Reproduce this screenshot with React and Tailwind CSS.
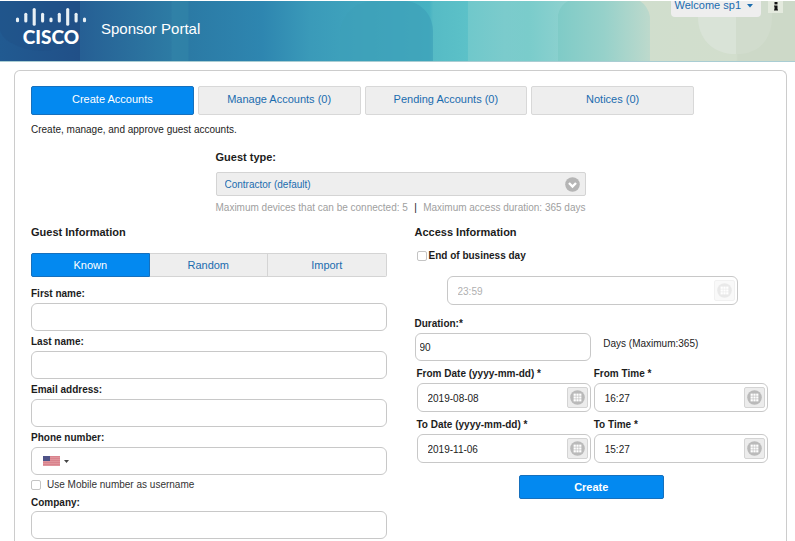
import { useState } from "react";

const TABS = ["Create Accounts", "Manage Accounts (0)", "Pending Accounts (0)", "Notices (0)"];
const MODES = ["Known", "Random", "Import"];

const BARS = [
  [17.5, 19, 20.8],
  [25.8, 14.2, 21],
  [34.2, 9.6, 24.2],
  [42.6, 14.2, 21],
  [51, 19, 20.8],
  [59.3, 14.2, 21],
  [67.7, 9.6, 24.2],
  [76.1, 14.2, 21],
  [84.5, 19, 20.8],
];

function HeaderArt() {
  return (
    <svg className="absolute inset-0 h-full w-full" viewBox="0 0 795 61" preserveAspectRatio="none" aria-hidden="true">
      <defs>
        <linearGradient id="sweep" x1="0" x2="1" y1="0" y2="0">
          <stop offset="0" stopColor="#215a91" />
          <stop offset="0.1" stopColor="#215088" />
          <stop offset="0.101" stopColor="#265f94" />
          <stop offset="0.215" stopColor="#2d7ba4" />
          <stop offset="0.217" stopColor="#3081a7" />
          <stop offset="0.236" stopColor="#2f81a7" />
          <stop offset="0.238" stopColor="#2b7aa5" />
          <stop offset="0.33" stopColor="#2e86b0" />
          <stop offset="0.39" stopColor="#3a9ab9" />
          <stop offset="0.54" stopColor="#47b2c2" />
          <stop offset="0.545" stopColor="#56bbc5" />
          <stop offset="0.588" stopColor="#5cc1c8" />
          <stop offset="0.589" stopColor="#70c8cb" />
          <stop offset="0.635" stopColor="#7bcbcc" />
          <stop offset="0.665" stopColor="#7acccb" />
          <stop offset="0.703" stopColor="#8ad0ce" />
          <stop offset="0.76" stopColor="#b4d8cc" />
          <stop offset="0.8" stopColor="#d0decd" />
          <stop offset="0.926" stopColor="#d2decd" />
          <stop offset="0.928" stopColor="#cdd9c8" />
          <stop offset="1" stopColor="#cdd9c8" />
        </linearGradient>
        <linearGradient id="arch" x1="0" x2="1" y1="0" y2="0">
          <stop offset="0" stopColor="#7fcbc7" />
          <stop offset="0.5" stopColor="#96d1ca" />
          <stop offset="1" stopColor="#bdd9cc" />
        </linearGradient>
      </defs>
      <rect width="795" height="61" fill="url(#sweep)" />
      <path d="M340 61V32C342 12 356 0 376 0H406C422 2 433 14 433 32V61Z" fill="#3d9fb9" opacity="0.65" />
      <path d="M558 61V14Q560 4 568 0H640Q648 5 650 16V61Z" fill="url(#arch)" />
      <path d="M698 0V16C698 38 712 54 736 54V0Z" fill="#d9e3d7" />
      <path d="M736 0H772V16C772 38 760 54 736 54Z" fill="#d1dccd" />
      <path d="M0 0H80V41Q40 60 10 42Q2 37 0 30Z" fill="#1f4c83" opacity="0.35" />
    </svg>
  );
}

function CiscoLogo() {
  return (
    <svg className="relative h-[50px] w-[90px] shrink-0" viewBox="0 0 90 50" role="img" aria-label="Cisco">
      {BARS.map(([x, top, bottom]) => (
        <line key={x} x1={x} x2={x} y1={top - 1} y2={bottom - 1} stroke="#e8f0f6" strokeWidth="3.1" strokeLinecap="round" />
      ))}
      <text x="51" y="43" textAnchor="middle" fill="#fff" fontFamily="Lato, sans-serif" fontWeight="900" fontSize="19">
        CISCO
      </text>
    </svg>
  );
}

function GridIcon() {
  return (
    <svg className="size-[15px]" viewBox="0 0 15 15" aria-hidden="true">
      <circle cx="7.5" cy="7.5" r="7.3" fill="#bababa" />
      {[0, 1, 2].map((r) =>
        [0, 1, 2].map((c) => (
          <rect key={`${r}${c}`} x={3.6 + c * 2.8} y={3.6 + r * 2.8} width="2.2" height="2.2" fill="#fff" />
        )),
      )}
    </svg>
  );
}

function PickerField({ id, label, value, disabled = false }) {
  return (
    <div className="flex h-[29px] items-center rounded-md border border-[#c8c8c8] bg-white pr-0.5">
      <input
        id={id}
        aria-label={label}
        defaultValue={value}
        disabled={disabled}
        className="h-full min-w-0 flex-1 bg-transparent pt-0.5 pl-2.5 text-[10px] outline-none disabled:text-[#b0b0b0]"
      />
      <button
        type="button"
        disabled={disabled}
        aria-label="Open picker"
        className="flex size-[21px] shrink-0 items-center justify-center rounded-xs border border-[#d4d4d4] bg-[#ececec] disabled:opacity-30"
      >
        <GridIcon />
      </button>
    </div>
  );
}

function LabelledPicker({ id, label, value }) {
  return (
    <div className="min-w-0">
      <label htmlFor={id} className="block h-[22px] leading-[26px] font-bold">
        {label}
      </label>
      <PickerField id={id} value={value} />
    </div>
  );
}

function TextField({ id, label }) {
  return (
    <div>
      <label htmlFor={id} className="block h-5 leading-[22px] font-bold">
        {label}
      </label>
      <input id={id} className="block h-7 w-full rounded-md border border-[#c8c8c8] px-2 text-[10px]" />
    </div>
  );
}

function Flag() {
  return (
    <svg className="h-[10px] w-[17px]" viewBox="0 0 17 10" aria-hidden="true">
      <rect width="17" height="10" fill="#e0959c" />
      {[0, 2, 4, 6, 8].map((y) => (
        <rect key={y} y={y} width="17" height="1" fill="#d9838d" />
      ))}
      <rect width="7" height="5" fill="#4f5388" />
    </svg>
  );
}

const CHECKBOX =
  "size-[10px] shrink-0 appearance-none rounded-xs border border-[#c4c4c4] bg-white checked:bg-[#0389f0]";

export default function App() {
  const [tab, setTab] = useState(0);
  const [mode, setMode] = useState(0);

  return (
    <div className="flex min-h-screen flex-col bg-white font-['Liberation_Sans',Arial,sans-serif] text-[10px] text-[#1c1c1c]">
      <header className="relative mt-px flex h-[61px] shrink-0 items-start border-b border-[#a9cdd3]">
        <HeaderArt />
        <CiscoLogo />
        <h1 className="relative ml-[11px] pt-4 text-[15px] leading-6 text-white">Sponsor Portal</h1>
        <div className="relative mr-3 ml-auto flex items-start gap-[7px]">
          <button
            type="button"
            className="flex h-4 items-start gap-1.5 rounded-b-sm bg-[#eeeeee] pr-2 pl-1 text-[11px] leading-[9px] text-[#1a6cae]"
          >
            Welcome sp1
            <svg className="mt-[3px] h-1 w-1.5" viewBox="0 0 6 4" aria-hidden="true">
              <path d="M0 0H6L3 3.5Z" fill="#1a6cae" />
            </svg>
          </button>
          <button type="button" aria-label="Information" className="flex h-3 w-[15px] justify-center bg-[#e4eade]">
            <svg className="h-3 w-2" viewBox="0 0 8 12" aria-hidden="true">
              <rect x="2.5" y="1" width="3" height="2.4" fill="#111" />
              <path d="M2 4.5H5.5V8.5H6V9.5H2V8.5H2.5V5.5H2Z" fill="#111" />
            </svg>
          </button>
        </div>
      </header>

      <main className="mt-2 mr-2 ml-[14px] flex-1 rounded-t-md border border-b-0 border-[#cccccc] px-4 pt-[15px] pb-[2px]">
        <nav className="grid max-w-[663px] grid-cols-4 gap-1">
          {TABS.map((name, i) => (
            <button
              key={name}
              type="button"
              onClick={() => setTab(i)}
              className={`h-[29px] rounded-xs border pb-0.5 text-[11px] ${
                i === tab ? "border-[#1670bd] bg-[#0389f0] text-white" : "border-[#d8d8d8] bg-[#eeeeee] text-[#1a6cae]"
              }`}
            >
              {name}
            </button>
          ))}
        </nav>
        <p className="mt-[5px] leading-5">Create, manage, and approve guest accounts.</p>

        <section className="mx-auto mt-[7px] w-[370px] max-w-full">
          <label htmlFor="guest-type" className="block text-[11px] leading-5 font-bold">
            Guest type:
          </label>
          <div className="relative mt-[5px]">
            <select
              id="guest-type"
              className="block h-6 w-full appearance-none rounded-xs border border-[#d4d4d4] bg-[#eeeeee] px-2 text-[10px] text-[#1a6cae]"
            >
              <option>Contractor (default)</option>
            </select>
            <svg className="pointer-events-none absolute top-[5px] right-1.5 size-[15px]" viewBox="0 0 15 15" aria-hidden="true">
              <circle cx="7.5" cy="7.5" r="7.3" fill="#b5b5b5" />
              <path d="M4 6L7.5 9.5L11 6" fill="none" stroke="#fff" strokeWidth="2.4" />
            </svg>
          </div>
          <p className="mt-1 flex justify-between leading-4 whitespace-nowrap text-[#a0a0a0]">
            <span>Maximum devices that can be connected: 5</span>
            <span className="text-[#1c1c1c]">|</span>
            <span>Maximum access duration: 365 days</span>
          </p>
        </section>

        <form className="mt-1.5 grid grid-cols-2 gap-7" onSubmit={(e) => e.preventDefault()}>
          <section>
            <h2 className="text-[11px] leading-5 font-bold">Guest Information</h2>
            <div className="mt-[11px] mb-1.5 grid grid-cols-3">
              {MODES.map((name, i) => (
                <button
                  key={name}
                  type="button"
                  onClick={() => setMode(i)}
                  className={`h-6 border text-[11px] first:rounded-l-xs last:rounded-r-xs ${
                    i === mode ? "border-[#1670bd] bg-[#0389f0] text-white" : "border-l-0 border-[#d4d4d4] bg-[#eeeeee] text-[#1a6cae]"
                  }`}
                >
                  {name}
                </button>
              ))}
            </div>
            <TextField id="first-name" label="First name:" />
            <TextField id="last-name" label="Last name:" />
            <TextField id="email" label="Email address:" />
            <div>
              <label htmlFor="phone" className="block h-5 leading-[22px] font-bold">
                Phone number:
              </label>
              <div className="flex h-7 items-center rounded-md border border-[#c8c8c8]">
                <button type="button" aria-label="Country code" className="flex items-center gap-1 pl-[11px]">
                  <Flag />
                  <svg className="h-[3px] w-[5px]" viewBox="0 0 5 3" aria-hidden="true">
                    <path d="M0 0H5L2.5 3Z" fill="#444" />
                  </svg>
                </button>
                <input id="phone" type="tel" className="h-full min-w-0 flex-1 bg-transparent px-2 outline-none" />
              </div>
            </div>
            <label className="flex items-center gap-1.5 leading-5 text-[#333]">
              <input type="checkbox" className={CHECKBOX} />
              Use Mobile number as username
            </label>
            <label htmlFor="company" className="block leading-4 font-bold">
              Company:
            </label>
            <input id="company" className="block h-7 w-full rounded-md border border-[#c8c8c8] px-2" />
          </section>

          <section className="pr-0.5">
            <h2 className="text-[11px] leading-5 font-bold">Access Information</h2>
            <label className="mt-1 flex items-center gap-0.5 pl-0.5 leading-5 font-bold">
              <input type="checkbox" className={CHECKBOX} />
              End of business day
            </label>
            <div className="mt-[10px] mr-[30px] ml-8">
              <PickerField id="end-of-day" label="End of business day time" value="23:59" disabled />
            </div>
            <label htmlFor="duration" className="mt-2 block h-5 leading-[22px] font-bold">
              Duration:*
            </label>
            <div className="flex">
              <input
                id="duration"
                defaultValue="90"
                className="block h-7 w-1/2 rounded-md border border-[#c8c8c8] px-1 text-[10px]"
              />
              <span className="ml-3 leading-[22px]">Days (Maximum:365)</span>
            </div>
            <div className="grid grid-cols-2 gap-x-[3px] pl-0.5">
              <LabelledPicker id="from-date" label="From Date (yyyy-mm-dd) *" value="2019-08-08" />
              <LabelledPicker id="from-time" label="From Time *" value="16:27" />
              <LabelledPicker id="to-date" label="To Date (yyyy-mm-dd) *" value="2019-11-06" />
              <LabelledPicker id="to-time" label="To Time *" value="15:27" />
            </div>
            <button
              type="submit"
              className="mx-auto mt-3 block h-6 w-[145px] rounded-xs border border-[#1670bd] bg-[#0389f0] text-[11px] font-bold text-white"
            >
              Create
            </button>
          </section>
        </form>
      </main>
    </div>
  );
}
